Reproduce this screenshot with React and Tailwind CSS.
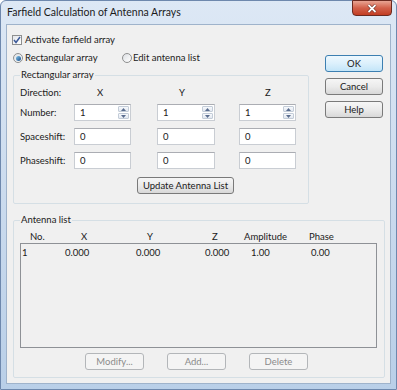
import React from 'react';

const font = { fontFamily: 'Lato, "Noto Sans", sans-serif' };

const Btn = ({ children, className = '', kind = 'normal' }) => {
  const look =
    kind === 'default'
      ? 'border-[#3c7fb1] bg-linear-to-b from-[#eef8fe] via-[#dcf0fc] to-[#c3e5f8] text-[#202020]'
      : kind === 'disabled'
      ? 'border-[#b3b6b9] bg-[#f4f4f4] text-[#8b8b8b]'
      : 'border-[#7a7a7a] bg-linear-to-b from-[#f6f6f6] via-[#ebebeb] to-[#d8d8d8] text-[#202020]';
  return (
    <div
      className={`h-[17px] flex items-center justify-center rounded-[3px] border text-[9.5px] leading-none ${look} ${className}`}
    >
      {children}
    </div>
  );
};

const Spinner = () => (
  <div className="absolute right-[1px] top-[1px] bottom-[1px] w-[11px] flex flex-col gap-px">
    {[0, 1].map((i) => (
      <div
        key={i}
        className="flex-1 flex items-center justify-center border border-[#c3ccd8] bg-linear-to-b from-[#f7f9fc] to-[#e2e8f0] rounded-[1px]"
      >
        <svg width="5" height="3" viewBox="0 0 5 3">
          <path d={i === 0 ? 'M0 3 L2.5 0 L5 3 Z' : 'M0 0 L2.5 3 L5 0 Z'} fill="#5a6d8f" />
        </svg>
      </div>
    ))}
  </div>
);

const Field = ({ value, spin, className = '' }) => (
  <div
    className={`relative h-[17px] w-[57px] bg-white border border-[#c9cdd3] border-t-[#abadb3] flex items-center pl-[5px] text-[9.5px] leading-none text-[#202020] ${className}`}
  >
    {value}
    {spin && <Spinner />}
  </div>
);

const Check = () => (
  <div className="w-[10px] h-[10px] border border-[#8e8f8f] bg-linear-to-br from-[#e4e6ea] to-white flex items-center justify-center">
    <svg width="8" height="8" viewBox="0 0 8 8">
      <path d="M1 4 L3 6.5 L7 1" stroke="#3c5a99" strokeWidth="1.5" fill="none" />
    </svg>
  </div>
);

const Radio = ({ on }) => (
  <div className="w-[10px] h-[10px] rounded-full border border-[#8e8f8f] bg-linear-to-br from-[#dcdfe3] to-white flex items-center justify-center">
    {on && <div className="w-[5px] h-[5px] rounded-full bg-linear-to-br from-[#7fc3e8] to-[#1d4f8c]" />}
  </div>
);

const Legend = ({ children }) => (
  <legend className="px-[1px] text-[9.5px] leading-[12px] text-[#202020]">{children}</legend>
);

export default function App() {
  return (
    <div
      className="w-[397px] h-[390px] flex flex-col rounded-t-[6px] border border-[#6e88ad] bg-linear-to-b from-[#dde8f5] via-[#cbdbee] to-[#b9cfe8] text-[#202020]"
      style={font}
    >
      {/* title bar */}
      <div className="h-[23px] flex items-start justify-between pl-[6px] pr-[4px]">
        <div className="mt-[5px] text-[10.5px] leading-[13px] text-[#1b1b1b]">Farfield Calculation of Antenna Arrays</div>
        <div className="w-[40px] h-[16px] -mt-px rounded-b-[4px] border border-[#6b2a20] bg-linear-to-b from-[#e8a493] via-[#d2604a] to-[#c23d22] flex items-center justify-center">
          <svg width="10" height="9" viewBox="0 0 10 9">
            <path d="M1.5 1 L8.5 8 M8.5 1 L1.5 8" stroke="#5a1c12" strokeWidth="3" />
            <path d="M1.5 1 L8.5 8 M8.5 1 L1.5 8" stroke="#ffffff" strokeWidth="1.8" />
          </svg>
        </div>
      </div>

      {/* client area */}
      <div className="flex-1 mx-[5px] mb-[5px] border border-[#9fb3cb] bg-[#f0f0f0] flex flex-col">
        <div className="pt-[10px] pl-[5px] flex items-center gap-[3px] h-[20px]">
          <Check />
          <span className="text-[9.5px] leading-none">Activate farfield array</span>
        </div>

        <div className="flex mt-[8px]">
          <div className="w-[302px] flex flex-col">
            <div className="h-[10px] flex items-center pl-[6px] text-[9.5px] leading-none">
              <Radio on />
              <span className="ml-[2px] w-[97px]">Rectangular array</span>
              <Radio />
              <span className="ml-[1px]">Edit antenna list</span>
            </div>

            <fieldset className="mt-[6px] ml-[6px] w-[296px] h-[135px] border border-[#d5dfe5] px-[6px] rounded-[2px]">
              <Legend>Rectangular array</Legend>
              <div className="flex flex-col text-[9.5px] leading-none">
                <div className="h-[12px] mt-[6px] flex items-center">
                  <span className="w-[54px]">Direction:</span>
                  <span className="w-[83px] pl-[23px]">X</span>
                  <span className="w-[82px] pl-[22px]">Y</span>
                  <span className="pl-[26px]">Z</span>
                </div>
                {[
                  ['Number:', '1', true, 'mt-[5px]'],
                  ['Spaceshift:', '0', false, 'mt-[7px]'],
                  ['Phaseshift:', '0', false, 'mt-[7px]'],
                ].map(([label, v, spin, m]) => (
                  <div key={label} className={`flex items-center ${m}`}>
                    <span className="w-[54px]">{label}</span>
                    <div className="w-[83px]">
                      <Field value={v} spin={spin} />
                    </div>
                    <div className="w-[82px]">
                      <Field value={v} spin={spin} className="w-[58px]" />
                    </div>
                    <Field value={v} spin={spin} />
                  </div>
                ))}
                <Btn className="mt-[8px] ml-[117px] w-[97px]">Update Antenna List</Btn>
              </div>
            </fieldset>
          </div>

          <div className="ml-[16px] mt-[2px] flex flex-col gap-[6px] w-[58px]">
            <Btn kind="default">OK</Btn>
            <Btn>Cancel</Btn>
            <Btn>Help</Btn>
          </div>
        </div>

        <fieldset className="mt-[10px] ml-[6px] w-[372px] h-[164px] border border-[#d5dfe5] px-[6px] rounded-[2px]">
          <Legend>Antenna list</Legend>
          <div className="h-[12px] mt-[5px] flex items-center text-[9.5px] leading-none">
            <span className="w-[61px] pl-[10px]">No.</span>
            <span className="w-[66px]">X</span>
            <span className="w-[65px]">Y</span>
            <span className="w-[32px]">Z</span>
            <span className="w-[65px]">Amplitude</span>
            <span>Phase</span>
          </div>
          <div className="h-[105px] w-[357px] border border-[#8e9196] bg-[#f0f0f0] pt-[3px]">
            <div className="h-[12px] flex items-center text-[9.5px] leading-none">
              <span className="w-[44px] pl-[1px]">1</span>
              <span className="w-[71px]">0.000</span>
              <span className="w-[69px]">0.000</span>
              <span className="w-[46px]">0.000</span>
              <span className="w-[60px]">1.00</span>
              <span>0.00</span>
            </div>
          </div>
          <div className="mt-[5px] flex pl-[65px] gap-[23px]">
            <Btn kind="disabled" className="w-[59px]">Modify...</Btn>
            <Btn kind="disabled" className="w-[59px]">Add...</Btn>
            <Btn kind="disabled" className="w-[59px]">Delete</Btn>
          </div>
        </fieldset>
      </div>
    </div>
  );
}
